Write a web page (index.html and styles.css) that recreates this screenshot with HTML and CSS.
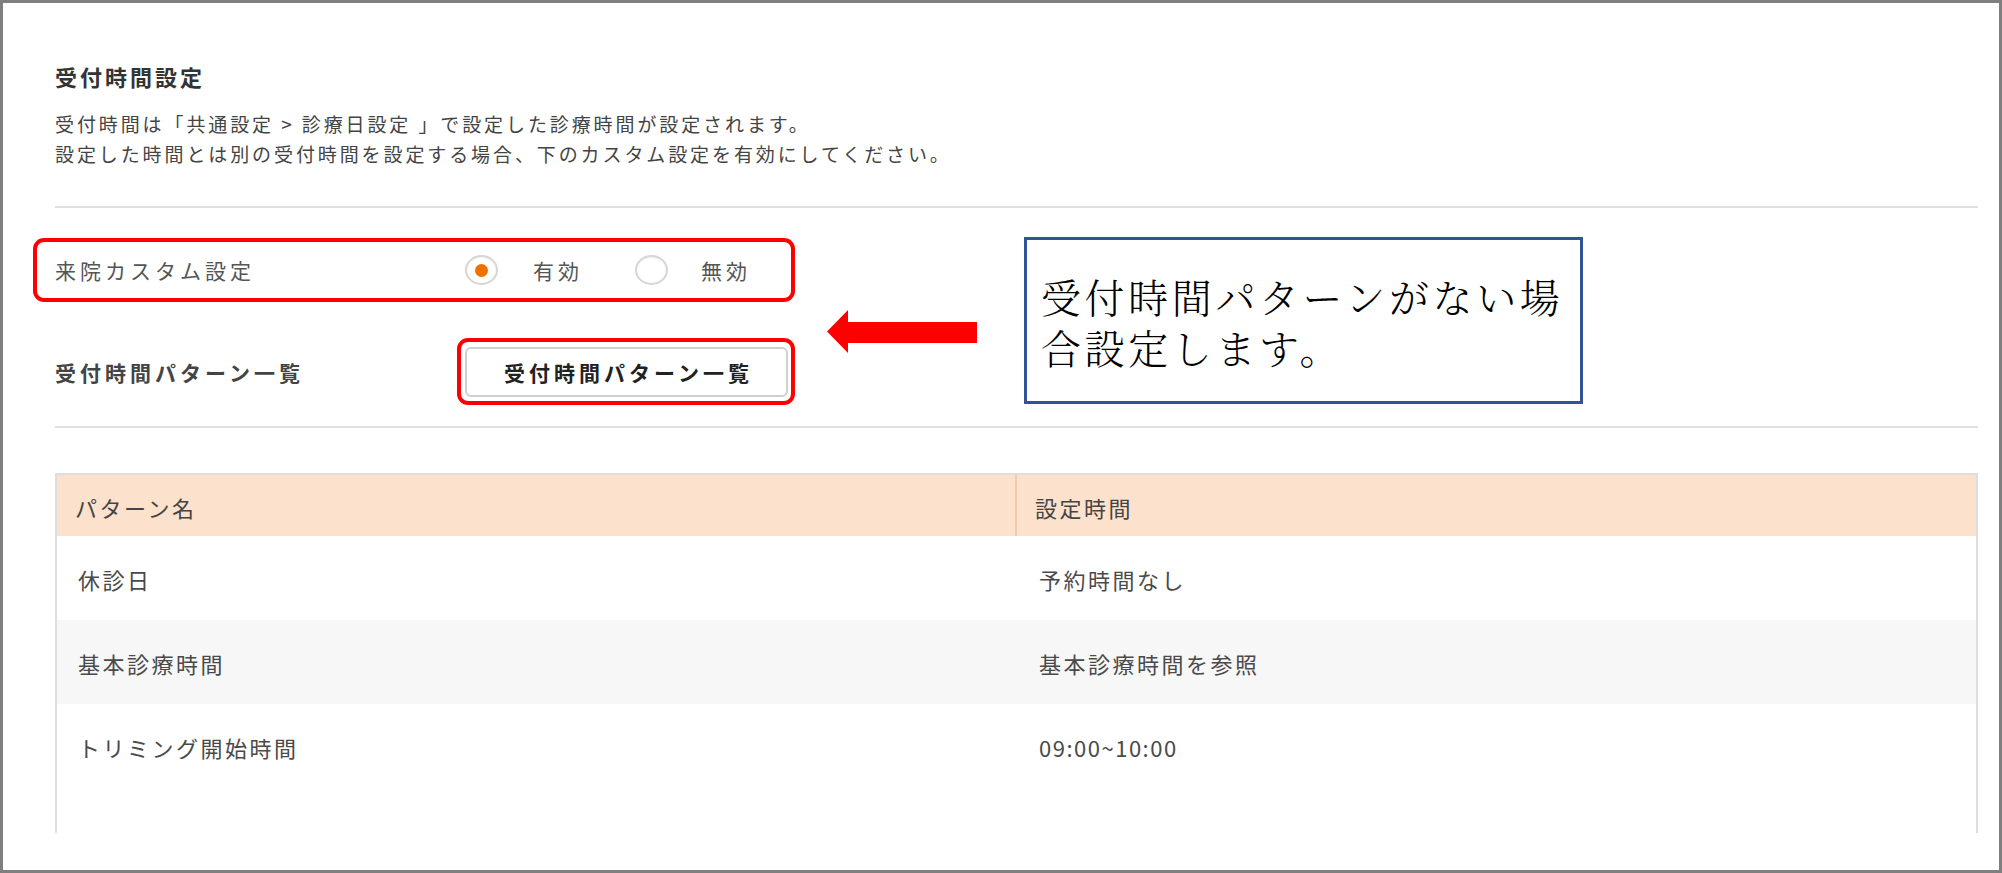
FILE: index.html
```html
<!DOCTYPE html>
<html lang="ja">
<head>
<meta charset="utf-8">
<title>受付時間設定</title>
<link rel="stylesheet" href="styles.css">
</head>
<body>
<div class="frame">
  <h1 class="title">受付時間設定</h1>
  <p class="desc">受付時間は「共通設定 &gt; 診療日設定 」で設定した診療時間が設定されます。<br>設定した時間とは別の受付時間を設定する場合、下のカスタム設定を有効にしてください。</p>
  <div class="rule"></div>

  <div class="settings">
    <div class="settings-rows">
      <div class="row row-custom">
        <span class="label">来院カスタム設定</span>
        <div class="radios">
          <span class="radio checked"><span class="dot"></span></span>
          <span class="radio-text">有効</span>
          <span class="radio"></span>
          <span class="radio-text">無効</span>
        </div>
      </div>
      <div class="row row-pattern">
        <span class="label label-bold">受付時間パターン一覧</span>
        <div class="btn-highlight">
          <button class="btn" type="button">受付時間パターン一覧</button>
        </div>
      </div>
    </div>
    <svg class="arrow" width="150" height="43" viewBox="0 0 150 43" aria-hidden="true">
      <polygon points="0,21.5 21,0 21,12 150,12 150,33 21,33 21,43" fill="#ff0000"/>
    </svg>
    <div class="callout">
      <p>受付時間パターンがない場<br>合設定します。</p>
    </div>
  </div>

  <div class="rule rule-2"></div>

  <div class="table-wrap">
    <table class="patterns">
      <thead>
        <tr><th class="col-name">パターン名</th><th class="col-time">設定時間</th></tr>
      </thead>
      <tbody>
        <tr><td>休診日</td><td>予約時間なし</td></tr>
        <tr class="alt"><td>基本診療時間</td><td>基本診療時間を参照</td></tr>
        <tr><td>トリミング開始時間</td><td class="num">09:00~10:00</td></tr>
      </tbody>
    </table>
  </div>
</div>
</body>
</html>
```

FILE: styles.css
```css
* { box-sizing: border-box; }

html, body {
  margin: 0;
  padding: 0;
  background: #ffffff;
}

body {
  width: 2002px;
  height: 873px;
  overflow: hidden;
  font-family: "Noto Sans CJK JP", "Noto Sans", sans-serif;
  color: #444;
}

.frame {
  width: 2002px;
  height: 873px;
  border: 3px solid #7f7f7f;
  padding: 58px 21px 0 52px;
  overflow: hidden;
}

.title {
  margin: 0;
  font-size: 22px;
  line-height: 30px;
  font-weight: 700;
  letter-spacing: 3px;
  color: #333;
}

.desc {
  margin: 18px 0 0;
  font-size: 19px;
  line-height: 30px;
  letter-spacing: 2.9px;
  color: #444;
}

.rule {
  height: 2px;
  background: #e0e0e0;
  margin-top: 37px;
}

.rule-2 {
  margin-top: 21px;
}

/* settings area */
.settings {
  display: flex;
  align-items: flex-start;
  margin-top: 30px;
  margin-left: -22px;
}

.settings-rows {
  width: 762px;
  display: flex;
  flex-direction: column;
  gap: 36px;
}

.row {
  display: flex;
  align-items: center;
}

.label {
  font-size: 21px;
  letter-spacing: 4px;
  color: #555;
  line-height: 30px;
}

.label-bold {
  font-weight: 700;
  color: #444;
}

.row-custom {
  height: 64px;
  border: 4px solid #ff0000;
  border-radius: 11px;
  padding-left: 18px;
}

.row-custom .label {
  width: 410px;
  flex: 0 0 410px;
}

.radios {
  display: flex;
  align-items: center;
}

.radio {
  width: 33px;
  height: 30px;
  border: 2px solid #d6d6d6;
  border-radius: 50%;
  background: #fff;
  display: flex;
  align-items: center;
  justify-content: center;
  box-shadow: inset 0 1px 2px rgba(0,0,0,0.06);
}

.dot {
  width: 13px;
  height: 13px;
  border-radius: 50%;
  background: #f07000;
}

.radio-text {
  font-size: 21px;
  letter-spacing: 4px;
  color: #555;
  line-height: 30px;
  margin-left: 35px;
  margin-right: 52px;
}

.radio-text:last-child {
  margin-right: 0;
  margin-left: 33px;
}

.row-pattern {
  height: 67px;
  padding-left: 22px;
}

.row-pattern .label {
  width: 402px;
  flex: 0 0 402px;
}

.btn-highlight {
  width: 338px;
  height: 67px;
  border: 4px solid #ff0000;
  border-radius: 11px;
  padding: 5px 3px 4px 4px;
}

.btn {
  display: block;
  width: 323px;
  height: 50px;
  border: 2px solid #cfcfcf;
  border-radius: 6px;
  background: #fff;
  font-family: "Noto Sans CJK JP", "Noto Sans", sans-serif;
  font-size: 21px;
  font-weight: 700;
  letter-spacing: 4px;
  color: #222;
  padding: 0 0 0 4px;
  line-height: 30px;
}

/* annotation */
.arrow {
  display: block;
  flex: 0 0 150px;
  margin-left: 32px;
  margin-top: 72px;
}

.callout {
  flex: 0 0 559px;
  height: 167px;
  margin-left: 47px;
  margin-top: -1px;
  border: 3px solid #2f5597;
  background: #fff;
  display: flex;
  align-items: center;
  padding-left: 14px;
}

.callout p {
  margin: 0;
  font-family: "Noto Serif CJK JP", "Noto Sans CJK JP", serif;
  font-weight: 300;
  font-size: 40px;
  line-height: 51px;
  letter-spacing: 3.6px;
  color: #000;
}

/* table */
.table-wrap {
  margin-top: 45px;
  height: 360px;
  border: 2px solid #dedede;
  border-bottom: none;
  overflow: hidden;
}

.patterns {
  width: 100%;
  border-collapse: collapse;
  table-layout: fixed;
}

.patterns th {
  height: 61px;
  background: #fce1cc;
  font-weight: 400;
  text-align: left;
  font-size: 22px;
  letter-spacing: 2.5px;
  color: #444;
  padding: 3px 0 0 18px;
}

.patterns .col-name {
  width: 959px;
}

.patterns .col-time {
  border-left: 2px solid #efcdb3;
}

.patterns td {
  height: 84px;
  font-size: 22px;
  letter-spacing: 2.5px;
  color: #4a4a4a;
  padding: 2px 0 0 21px;
}

.patterns td + td {
  padding-left: 23px;
}

.patterns tr.alt td {
  background: #f7f7f7;
}

.patterns td.num {
  letter-spacing: 1.5px;
}
```
